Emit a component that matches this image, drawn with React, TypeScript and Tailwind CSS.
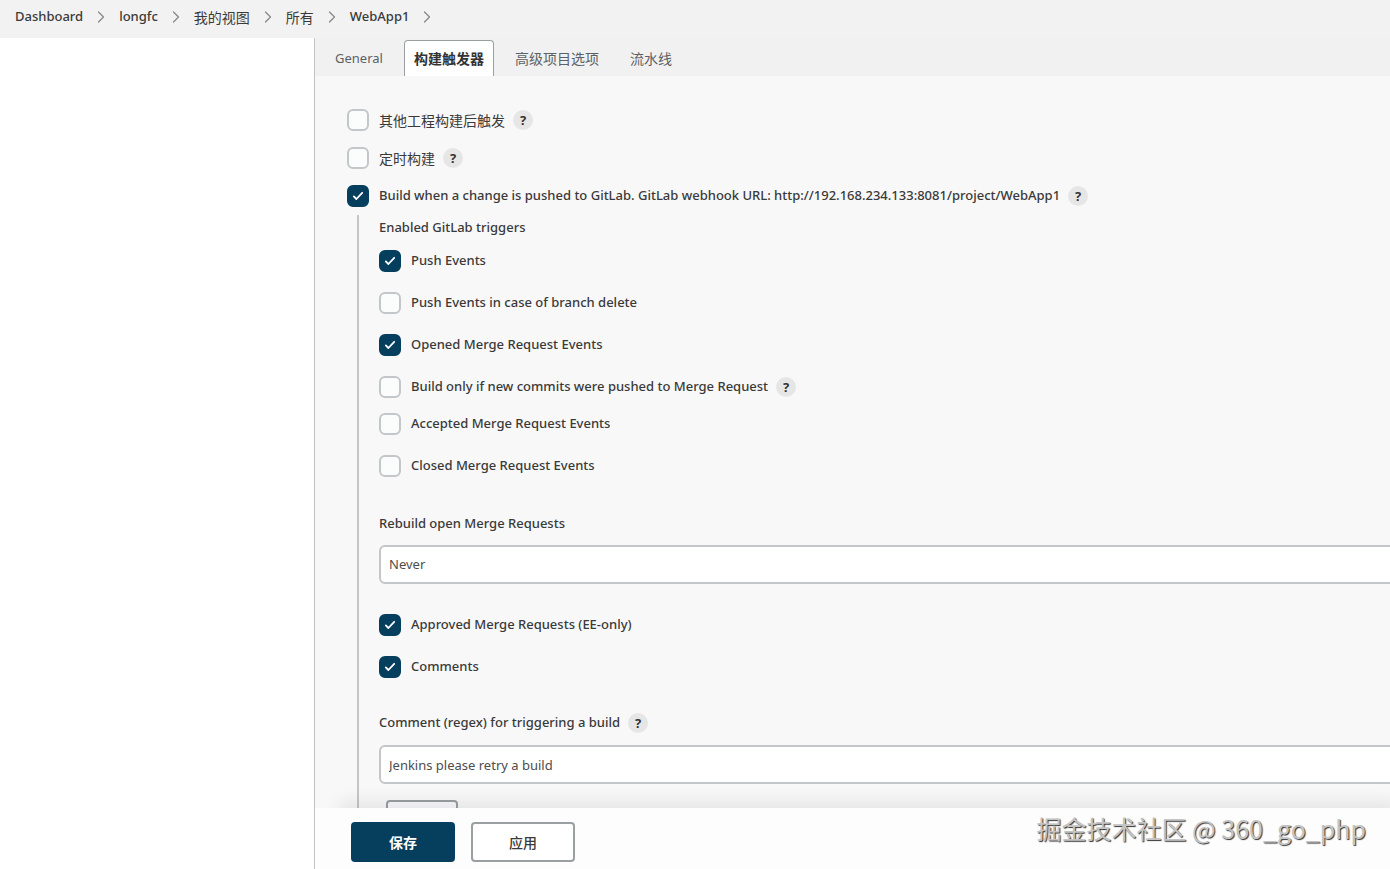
import React from "react";
import { ChevronRight } from "lucide-react";

interface Trigger {
  id: string;
  label: string;
  checked?: boolean;
  help?: boolean;
}

const crumbs = ["Dashboard", "longfc", "我的视图", "所有", "WebApp1"];
const tabs = ["General", "构建触发器", "高级项目选项", "流水线"];

const mergeTriggers: Trigger[] = [
  { id: "push", label: "Push Events", checked: true },
  { id: "push-delete", label: "Push Events in case of branch delete" },
  { id: "mr-opened", label: "Opened Merge Request Events", checked: true },
  { id: "mr-new-commits", label: "Build only if new commits were pushed to Merge Request", help: true },
];

const closedTriggers: Trigger[] = [
  { id: "mr-accepted", label: "Accepted Merge Request Events" },
  { id: "mr-closed", label: "Closed Merge Request Events" },
];

const otherTriggers: Trigger[] = [
  { id: "mr-approved", label: "Approved Merge Requests (EE-only)", checked: true },
  { id: "comments", label: "Comments", checked: true },
];

function isCjk(s: string): boolean {
  return /[\u4e00-\u9fff]/.test(s);
}

// CJK labels run one size up and one weight down from the Latin ones
function labelText(s: string): string {
  return isCjk(s) ? "text-[14px] font-normal" : "text-[13px] font-medium";
}

function HelpButton({ label }: { label: string }) {
  return (
    <button
      type="button"
      aria-label={`Help for ${label}`}
      className="ml-2 size-5 shrink-0 rounded-full bg-[#e6e6e6] text-[13px] leading-5 font-bold text-[#333]"
    >
      ?
    </button>
  );
}

function CheckRow({ id, label, checked, help }: Trigger) {
  return (
    <div className="flex h-[22px] items-center">
      <span className="relative flex size-[22px] shrink-0">
        <input
          id={id}
          type="checkbox"
          defaultChecked={checked}
          className="peer size-full appearance-none rounded-md border-2 border-[#c3c7c9] bg-[#fbfcfc] checked:border-[#063e5e] checked:bg-[#063e5e]"
        />
        <svg
          viewBox="0 0 22 22"
          className="pointer-events-none absolute inset-0 hidden size-full peer-checked:block"
          fill="none"
          stroke="white"
          strokeWidth="1.8"
          strokeLinecap="round"
          strokeLinejoin="round"
        >
          <path d="M6.8 11.4 9.4 14 15.2 7.8" />
        </svg>
      </span>
      <label htmlFor={id} className={`ml-[10px] whitespace-nowrap ${labelText(label)}`}>
        {label}
      </label>
      {help && <HelpButton label={label} />}
    </div>
  );
}

export default function App() {
  return (
    <div className="flex h-screen flex-col overflow-hidden bg-white font-['Noto_Sans','Noto_Sans_CJK_SC',sans-serif] text-[#3a3a3a]">
      <header className="h-[38px] shrink-0 bg-[#f2f2f2] pl-[15px]">
        <nav aria-label="Breadcrumb" className="flex h-[34px] items-center">
          {crumbs.map((c) => (
            <React.Fragment key={c}>
              <a href="#" className={labelText(c)}>{c}</a>
              <ChevronRight className="mx-2 size-5 text-[#888]" strokeWidth={1.5} />
            </React.Fragment>
          ))}
        </nav>
      </header>

      <div className="flex min-h-0 flex-1">
        <aside className="w-[315px] shrink-0 border-r border-[#bfc3c5] bg-white" />

        <main className="flex min-w-0 flex-1 flex-col bg-[#f8f8f8]">
          <div role="tablist" className="flex h-[38px] shrink-0 items-end gap-[11px] bg-[#f1f1f1] pl-[10px]">
            {tabs.map((t, i) => (
              <button
                key={t}
                type="button"
                role="tab"
                aria-selected={i === 1}
                className={`h-9 rounded-t border border-b-0 px-[9px] ${isCjk(t) ? "text-[14px]" : "text-[13px]"} ${i === 1 ? "border-[#9a9fa2] bg-white font-bold text-[#333]" : "border-transparent text-[#5c6165]"}`}
              >
                {t}
              </button>
            ))}
          </div>

          <div className="min-h-0 flex-1 overflow-hidden pt-[33px] pl-8">
            <div className="flex flex-col gap-4">
              <CheckRow id="upstream" label="其他工程构建后触发" help />
              <CheckRow id="timer" label="定时构建" help />
              <CheckRow
                id="gitlab"
                label="Build when a change is pushed to GitLab. GitLab webhook URL: http://192.168.234.133:8081/project/WebApp1"
                checked
                help
              />
            </div>

            <div className="-mr-2 mt-2 ml-[10px] border-l-2 border-[#c3c7c9] pl-5">
              <h3 className="text-[13px] leading-6 font-medium">Enabled GitLab triggers</h3>
              <div className="mt-[11px] flex flex-col gap-5">
                {mergeTriggers.map((t) => <CheckRow key={t.id} {...t} />)}
              </div>
              <div className="mt-[15px] flex flex-col gap-5">
                {closedTriggers.map((t) => <CheckRow key={t.id} {...t} />)}
              </div>

              <label htmlFor="rebuild" className="mt-[34px] block text-[13px] leading-6 font-medium">
                Rebuild open Merge Requests
              </label>
              <select
                id="rebuild"
                className="mt-[10px] block h-[39px] w-full appearance-none rounded-md border-2 border-[#c3c7c9] bg-white px-2 text-[13px] text-[#4d4d4d]"
              >
                <option>Never</option>
              </select>

              <div className="mt-[30px] flex flex-col gap-5">
                {otherTriggers.map((t) => <CheckRow key={t.id} {...t} />)}
              </div>

              <div className="mt-[33px] flex h-6 items-center">
                <label htmlFor="comment" className="text-[13px] font-medium">Comment (regex) for triggering a build</label>
                <HelpButton label="Comment (regex)" />
              </div>
              <input
                id="comment"
                type="text"
                defaultValue="Jenkins please retry a build"
                className="mt-[10px] block h-[39px] w-full rounded-md border-2 border-[#c3c7c9] bg-white px-2 text-[13px] text-[#4d4d4d]"
              />
              <button type="button" aria-label="Advanced" className="mt-4 ml-[7px] block h-10 w-[72px] rounded border-2 border-[#9a9fa2] bg-[#f9f9fb]" />
            </div>
          </div>

          <footer className="relative flex h-[61px] shrink-0 items-center justify-between bg-[#fdfdfd] pt-[7px] pr-6 pl-9 shadow-[16px_-16px_16px_-8px_rgb(0_0_0/0.07)]">
            <div className="flex gap-4">
              <button type="button" className="h-10 w-[104px] rounded bg-[#063e5e] text-[14px] font-bold text-white">保存</button>
              <button type="button" className="h-10 w-[104px] rounded border-2 border-[#9a9fa2] bg-white text-[14px] font-medium">应用</button>
            </div>
            <span className="mb-7 font-['Noto_Sans_CJK_SC',sans-serif] text-[25px] leading-8 text-[#c4c4c4] [text-shadow:1px_1px_1px_#333]">
              掘金技术社区 @ 360_go_php
            </span>
          </footer>
        </main>
      </div>
    </div>
  );
}
